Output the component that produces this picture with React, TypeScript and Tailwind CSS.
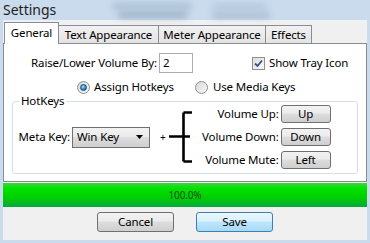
const font = { fontFamily: '"Noto Sans", "Segoe UI", sans-serif' }

function Tab({ label, active, width }: { label: string; active?: boolean; width: string }) {
  if (active) {
    return (
      <div className={`relative z-10 -mr-[1px] flex h-[22px] items-center justify-center border border-b-0 border-[#898c95] bg-white pb-[1px] text-[11.5px] ${width}`}>
        {label}
      </div>
    )
  }
  return (
    <div className={`-mr-[1px] mt-[3px] flex h-[18px] items-center justify-center border border-b-0 border-[#898c95] bg-gradient-to-b from-[#f2f2f2] to-[#e3e3e3] text-[11.5px] ${width}`}>
      {label}
    </div>
  )
}

function WinButton({ label, primary, className }: { label: string; primary?: boolean; className: string }) {
  return (
    <button
      type="button"
      className={
        primary
          ? `flex items-center justify-center rounded-[3px] border border-[#3c7fb1] bg-[linear-gradient(#eaf6fd_0%,#d9f0fc_45%,#bee6fd_50%,#a7d9f5_100%)] text-[11.5px] leading-none ${className}`
          : `flex items-center justify-center rounded-[3px] border border-[#707070] bg-[linear-gradient(#f2f2f2_0%,#ebebeb_45%,#dddddd_50%,#cfcfcf_100%)] text-[11.5px] leading-none ${className}`
      }
    >
      {label}
    </button>
  )
}

function Radio({ checked }: { checked?: boolean }) {
  return (
    <span className="flex h-[13px] w-[13px] items-center justify-center rounded-full border border-[#8e8f8f] bg-gradient-to-br from-[#d8d8d8] to-[#f8f8f8]">
      {checked && (
        <span className="h-[7px] w-[7px] rounded-full border border-[#1b4a6e] bg-[radial-gradient(circle_at_40%_35%,#9fe3ff,#2f8cc7_55%,#124a7a)]" />
      )}
    </span>
  )
}

export default function App() {
  return (
    <div className="relative h-[243px] w-[370px] overflow-hidden bg-[#c9dbec] text-black" style={font}>
      {/* blurred desktop behind the aero title bar */}
      <div className="absolute left-[112px] top-[3px] h-[6px] w-[80px] rounded-full bg-[#7f96b0] opacity-40 blur-[3px]" />
      <div className="absolute left-[118px] top-[12px] h-[6px] w-[70px] rounded-full bg-[#6f86a3] opacity-50 blur-[3px]" />
      <div className="absolute left-[212px] top-[4px] h-[5px] w-[55px] rounded-full bg-[#8fa5bd] opacity-40 blur-[3px]" />
      <div className="absolute left-[212px] top-[13px] h-[5px] w-[58px] rounded-full bg-[#7f96b0] opacity-50 blur-[3px]" />

      <div className="relative h-[20px] pl-[3px] text-[14px] leading-[19px] text-[#1e1e1e]">Settings</div>

      <div className="mx-[3px] flex h-[220px] flex-col bg-[#f0f0f0] pt-[2px] tracking-[-0.15px]">
        {/* tab strip */}
        <div className="ml-[1px] flex h-[22px] items-start">
          <Tab label="General" active width="w-[55px]" />
          <Tab label="Text Appearance" width="w-[101px]" />
          <Tab label="Meter Appearance" width="w-[108px]" />
          <Tab label="Effects" width="w-[47px]" />
        </div>

        {/* tab page */}
        <div className="-mt-[1px] flex h-[139px] flex-col border border-[#898c95] bg-white text-[11.5px]">
          <div className="mt-[9px] flex h-[20px] items-center">
            <span className="w-[153px] text-right">Raise/Lower Volume By:</span>
            <div className="ml-[2px] flex h-[20px] w-[34px] items-center border border-[#abadb3] pl-[3px]">2</div>
            <span className="ml-[59px] flex h-[13px] w-[13px] items-center justify-center border border-[#8f8f8f] bg-gradient-to-br from-[#dcdcdc] to-[#fbfbfb]">
              <svg width="9" height="9" viewBox="0 0 9 9">
                <path d="M1 4.5 L3.5 7 L8 1.5" fill="none" stroke="#3b4e8c" strokeWidth="1.8" />
              </svg>
            </span>
            <span className="ml-[4px]">Show Tray Icon</span>
          </div>

          <div className="mt-[7px] flex h-[14px] items-center">
            <div className="ml-[73px] flex w-[118px] items-center gap-[4px]">
              <Radio checked />
              <span>Assign Hotkeys</span>
            </div>
            <div className="flex items-center gap-[5px]">
              <Radio />
              <span>Use Media Keys</span>
            </div>
          </div>

          <fieldset className="mx-[8px] mt-[0px] h-[80px] rounded-[3px] border border-[#d5dfe5] px-0 pb-0">
            <legend className="ml-[6px] px-[2px] text-[11.5px] leading-[14px]">HotKeys</legend>
            <div className="-mt-[3px] flex items-center">
              <span className="w-[57px] text-right">Meta Key:</span>
              <div className="ml-[2px] flex h-[21px] w-[78px] items-center justify-between border border-[#707070] bg-[linear-gradient(#f2f2f2_0%,#ebebeb_45%,#dddddd_50%,#cfcfcf_100%)] pl-[4px] pr-[6px]">
                <span>Win Key</span>
                <svg width="7" height="4" viewBox="0 0 7 4">
                  <path d="M0 0 H7 L3.5 4 Z" fill="#000" />
                </svg>
              </div>
              <span className="ml-[10px] text-[10px]">+</span>
              <svg className="ml-[1px]" width="26" height="52" viewBox="0 0 26 52">
                <path d="M16.5 1.5 V50.5 M16.5 1.5 H25 M16.5 25.5 H23 M16.5 50.5 H25 M2 25.5 H16.5" stroke="#000" strokeWidth="2.6" fill="none" />
              </svg>
              <div className="flex flex-col gap-[5px]">
                {[
                  ['Volume Up:', 'Up'],
                  ['Volume Down:', 'Down'],
                  ['Volume Mute:', 'Left'],
                ].map(([label, key]) => (
                  <div key={key} className="flex h-[18px] items-center">
                    <span className="w-[86px] text-right">{label}</span>
                    <WinButton label={key} className="ml-[2px] h-[18px] w-[50px]" />
                  </div>
                ))}
              </div>
            </div>
          </fieldset>
        </div>

        {/* progress */}
        <div className="mt-[1px] flex h-[24px] items-center justify-center bg-[linear-gradient(#3ad63a_0%,#00e000_25%,#00d000_60%,#06a83c_100%)] text-[10px] text-[#1f4d1f]">
          100.0%
        </div>

        <div className="mt-[5px] flex gap-[22px] pl-[94px]">
          <WinButton label="Cancel" className="h-[20px] w-[77px]" />
          <WinButton label="Save" primary className="h-[20px] w-[77px]" />
        </div>
      </div>
    </div>
  )
}
